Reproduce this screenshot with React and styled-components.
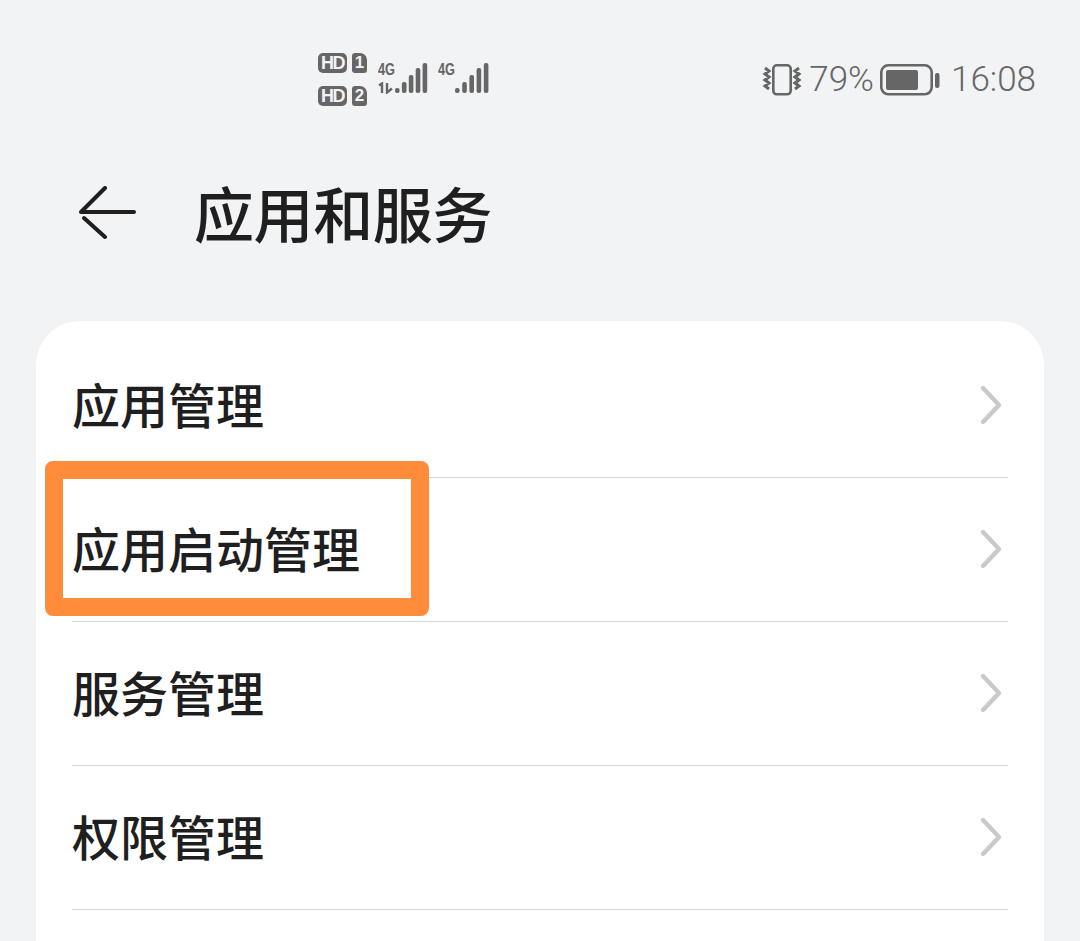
import React from 'react'
import styled, { createGlobalStyle } from 'styled-components'

const GlobalStyle = createGlobalStyle`
html, body {
    margin:0;
    padding:0;
    height:941px;
    overflow:hidden;
    background:#f1f3f5;
    font-family:"Noto Sans CJK SC","Noto Sans",sans-serif;
}
`;
const Container = styled.div`
width:1080px;
height:941px;
overflow:hidden;
background:#f1f3f5;
`;
const StatusBar = styled.div`
height:44px;
padding-top:57px;
display:flex;
align-items:center;
`;
const SimBlock = styled.div`
margin-left:318px;
display:flex;
flex-direction:column;
gap:13px;
width:49px;
`;
const SimRow = styled.div`
display:flex;
align-items:center;
gap:5px;
`;
const HdBadge = styled.span`
width:29px;
height:20px;
border-radius:5px;
background:#666;
color:#f1f3f5;
font:700 18px/20px "Liberation Sans",sans-serif;
letter-spacing:-1.5px;
text-align:center;
`;
const SimBadge = styled.span`
width:15px;
height:20px;
border-radius:3px 7px 3px 3px;
background:#666;
color:#f1f3f5;
font:700 17px/20px "Liberation Sans",sans-serif;
text-align:center;
`;
const Signal = styled.div`
position:relative;
width:${props=>props.w}px;
height:32px;
margin-left:${props=>props.ml}px;
`;
const SignalLabel = styled.span`
position:absolute;
left:0;
top:-1px;
color:#666;
font:700 17px/16px "Liberation Sans",sans-serif;
transform:scaleX(.75);
transform-origin:left center;
`;
const SignalBars = styled.svg`
position:absolute;
left:0;
top:0;
`;
const DataArrows = styled.svg`
position:absolute;
left:0;
top:19px;
`;
const RightGroup = styled.div`
margin-left:auto;
margin-right:44px;
margin-top:2px;
display:flex;
align-items:center;
color:#666;
font:300 35px/44px "Roboto","Noto Sans",sans-serif;
`;
const Percent = styled.span`
margin-left:7px;
`;
const Battery = styled.svg`
margin-left:6px;
`;
const Time = styled.span`
margin-left:11px;
`;
const Header = styled.div`
height:220px;
display:flex;
align-items:center;
padding-left:78px;
box-sizing:border-box;
padding-top:4px;
`;
const Title = styled.h1`
margin:-2px 0 0 56px;
font-size:60px;
font-weight:500;
line-height:80px;
color:#1f1f1f;
letter-spacing:-.4px;
`;
const Card = styled.div`
position:relative;
margin:0 36px;
padding:13px 36px 0;
height:620px;
box-sizing:border-box;
background:#fff;
border-radius:44px 44px 0 0;
`;
const Row = styled.div`
height:144px;
box-sizing:border-box;
display:flex;
align-items:center;
justify-content:space-between;
border-bottom:1px solid #d4d5d7;
`;
const RowLabel = styled.span`
font-size:48px;
font-weight:500;
line-height:60px;
color:#1f1f1f;
margin-top:-6px;
`;
const Chevron = styled.svg`
margin-right:6px;
margin-top:-2px;
`;
const Highlight = styled.div`
position:absolute;
left:9px;
top:140px;
width:384px;
height:155px;
box-sizing:border-box;
border:18px solid #ff8c3b;
border-radius:8px;
`;

const rows = ['应用管理','应用启动管理','服务管理','权限管理'];
const barHeights = [5,11,18,25,30];

const Bars = ({ w, pitch, startX }) => (
    <SignalBars width={w} height="32" viewBox={`0 0 ${w} 32`}>
        {barHeights.map((h, i) => (
            <rect key={i} x={startX + i * pitch} y={30 - h} width="4.6" height={h} rx="2" fill="#666" />
        ))}
    </SignalBars>
);

const App = () => {
    return (
        <Container>
            <GlobalStyle/>
            <StatusBar>
                <SimBlock>
                    <SimRow><HdBadge>HD</HdBadge><SimBadge>1</SimBadge></SimRow>
                    <SimRow><HdBadge>HD</HdBadge><SimBadge>2</SimBadge></SimRow>
                </SimBlock>
                <Signal w={50} ml={11}>
                    <SignalLabel>4G</SignalLabel>
                    <Bars w={50} pitch={6.9} startX={17} />
                    <DataArrows width="16" height="12" viewBox="0 0 16 12" fill="none" stroke="#666" strokeWidth="2.4">
                        <path d="M1 3.5l3-2V11M9 1v9.5l5-4"/>
                    </DataArrows>
                </Signal>
                <Signal w={52} ml={10}>
                    <SignalLabel>4G</SignalLabel>
                    <Bars w={52} pitch={7.2} startX={17} />
                </Signal>
                <RightGroup>
                    <svg width="40" height="32" viewBox="0 0 40 32" fill="none" stroke="#666">
                        <rect x="11.3" y="1.3" width="17.4" height="29" rx="3.5" strokeWidth="2.6"/>
                        <path d="M3 4l4 3-4 3 4 3-4 3 4 3-4 3 4 3M37 4l-4 3 4 3-4 3 4 3-4 3 4 3-4 3" strokeWidth="3"/>
                    </svg>
                    <Percent>79%</Percent>
                    <Battery width="60" height="32" viewBox="0 0 60 32" fill="none">
                        <rect x="1.3" y="1.3" width="50.4" height="29" rx="7" stroke="#666" strokeWidth="2.6"/>
                        <rect x="6" y="6" width="32" height="20" rx="2" fill="#666"/>
                        <rect x="55" y="9" width="4.5" height="15" rx="2" fill="#666"/>
                    </Battery>
                    <Time>16:08</Time>
                </RightGroup>
            </StatusBar>
            <Header>
                <svg width="60" height="54" viewBox="0 0 60 54" fill="none" stroke="#1f1f1f" strokeWidth="4" strokeLinecap="round" strokeLinejoin="round">
                    <path d="M56 26H3L27 2M6 32l21 19"/>
                </svg>
                <Title>应用和服务</Title>
            </Header>
            <Card>
                {rows.map(label => (
                    <Row key={label}>
                        <RowLabel>{label}</RowLabel>
                        <Chevron width="24" height="40" viewBox="0 0 24 40" fill="none" stroke="#c8c9cb" strokeWidth="4.4" strokeLinecap="round" strokeLinejoin="round">
                            <path d="M5 3l16 17L5 37"/>
                        </Chevron>
                    </Row>
                ))}
                <Highlight/>
            </Card>
        </Container>
    )
}

export default App
